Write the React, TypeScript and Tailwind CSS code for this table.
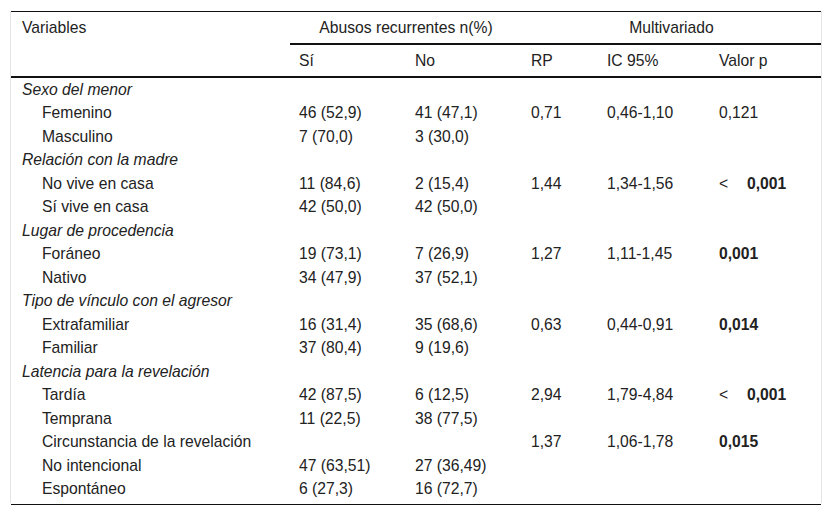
import React from "react";

type Row = {
  label: React.ReactNode;
  group?: boolean;
  si?: string;
  no?: string;
  rp?: string;
  ic?: string;
  p?: React.ReactNode;
};

const lt = (v: string) => (
  <span className="flex items-center">
    <span className="w-[28px]">&lt;</span>
    <span className="font-bold">{v}</span>
  </span>
);

const rows: Row[] = [
  { label: "Sexo del menor", group: true },
  { label: "Femenino", si: "46 (52,9)", no: "41 (47,1)", rp: "0,71", ic: "0,46-1,10", p: "0,121" },
  { label: "Masculino", si: "7 (70,0)", no: "3 (30,0)" },
  { label: "Relación con la madre", group: true },
  { label: "No vive en casa", si: "11 (84,6)", no: "2 (15,4)", rp: "1,44", ic: "1,34-1,56", p: lt("0,001") },
  { label: "Sí vive en casa", si: "42 (50,0)", no: "42 (50,0)" },
  { label: "Lugar de procedencia", group: true },
  { label: "Foráneo", si: "19 (73,1)", no: "7 (26,9)", rp: "1,27", ic: "1,11-1,45", p: <span className="font-bold">0,001</span> },
  { label: "Nativo", si: "34 (47,9)", no: "37 (52,1)" },
  { label: "Tipo de vínculo con el agresor", group: true },
  { label: "Extrafamiliar", si: "16 (31,4)", no: "35 (68,6)", rp: "0,63", ic: "0,44-0,91", p: <span className="font-bold">0,014</span> },
  { label: "Familiar", si: "37 (80,4)", no: "9 (19,6)" },
  {
    label: (
      <>
        <span className="italic">Latencia para la revelació</span>n
      </>
    ),
    group: true,
  },
  { label: "Tardía", si: "42 (87,5)", no: "6 (12,5)", rp: "2,94", ic: "1,79-4,84", p: lt("0,001") },
  { label: "Temprana", si: "11 (22,5)", no: "38 (77,5)" },
  { label: "Circunstancia de la revelación", rp: "1,37", ic: "1,06-1,78", p: <span className="font-bold">0,015</span> },
  { label: "No intencional", si: "47 (63,51)", no: "27 (36,49)" },
  { label: "Espontáneo", si: "6 (27,3)", no: "16 (72,7)" },
];

const cols = "grid grid-cols-[279px_116px_116px_76px_112px_111px]";

export default function App() {
  return (
    <div
      className="w-[832px] h-[517px] bg-white text-[#222] text-[15.7px] leading-none"
      style={{ fontFamily: '"Liberation Sans", Arial, sans-serif' }}
    >
      <div className="pt-[11px] pl-[10px]">
        <div className="w-[812px] h-[492px] border-x border-[#e4e4e4]">
          <div className="border-t border-[#111]">
            {/* header row 1 */}
            <div className={cols + " h-[31px] items-center"}>
              <div className="pl-[11px]">Variables</div>
              <div className="col-span-2 text-center">Abusos recurrentes n(%)</div>
              <div className="col-span-3 text-center">Multivariado</div>
            </div>
            <div className="ml-[279px] h-[2px] bg-[#111]" />
            {/* header row 2 */}
            <div className={cols + " h-[31px] items-center"}>
              <div />
              <div className="pl-[9px]">Sí</div>
              <div className="pl-[9px]">No</div>
              <div className="pl-[9px]">RP</div>
              <div className="pl-[9px]">IC 95%</div>
              <div className="pl-[9px]">Valor p</div>
            </div>
            <div className="h-[2px] bg-[#111]" />
            {/* body */}
            <div>
              {rows.map((r, i) => (
                <div key={i} className={cols + " h-[23.5px] items-center"}>
                  <div className={r.group ? "pl-[11px] italic" : "pl-[31px]"}>{r.label}</div>
                  <div className="pl-[9px]">{r.si}</div>
                  <div className="pl-[9px]">{r.no}</div>
                  <div className="pl-[9px]">{r.rp}</div>
                  <div className="pl-[9px]">{r.ic}</div>
                  <div className="pl-[9px]">{r.p}</div>
                </div>
              ))}
            </div>
          </div>
        </div>
        <div className="ml-[1px] mt-[1px] w-[810px] h-[1px] bg-[#111]" />
      </div>
    </div>
  );
}
